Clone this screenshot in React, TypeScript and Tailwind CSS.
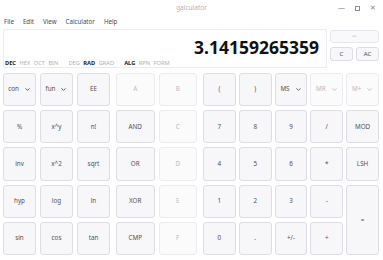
import { ChevronDown } from 'lucide-react';

type Btn = { label: string; off?: boolean; drop?: boolean; span?: boolean };

function Key({ b }: { b: Btn }) {
  return (
    <div
      className={`flex items-center justify-center gap-[5px] rounded-[3px] border text-[6.3px] leading-none ${
        b.off ? 'border-[#ebecf1] bg-[#fbfbfc] text-[#b9bac2]' : 'border-[#dcdde6] bg-[#f7f7f9] text-[#505056]'
      } ${b.span ? 'row-span-2' : ''}`}
    >
      <span>{b.label}</span>
      {b.drop && <ChevronDown className="h-[7px] w-[7px]" strokeWidth={3} />}
    </div>
  );
}

const leftKeys: Btn[] = [
  { label: 'con', drop: true }, { label: 'fun', drop: true }, { label: 'EE' },
  { label: '%' }, { label: 'x^y' }, { label: 'n!' },
  { label: 'inv' }, { label: 'x^2' }, { label: 'sqrt' },
  { label: 'hyp' }, { label: 'log' }, { label: 'ln' },
  { label: 'sin' }, { label: 'cos' }, { label: 'tan' },
];

const midKeys: Btn[] = [
  { label: 'A', off: true }, { label: 'B', off: true },
  { label: 'AND' }, { label: 'C', off: true },
  { label: 'OR' }, { label: 'D', off: true },
  { label: 'XOR' }, { label: 'E', off: true },
  { label: 'CMP' }, { label: 'F', off: true },
];

const rightKeys: Btn[] = [
  { label: '(' }, { label: ')' }, { label: 'MS', drop: true }, { label: 'MR', drop: true, off: true }, { label: 'M+', drop: true, off: true },
  { label: '7' }, { label: '8' }, { label: '9' }, { label: '/' }, { label: 'MOD' },
  { label: '4' }, { label: '5' }, { label: '6' }, { label: '*' }, { label: 'LSH' },
  { label: '1' }, { label: '2' }, { label: '3' }, { label: '-' }, { label: '=', span: true },
  { label: '0' }, { label: '.' }, { label: '+/-' }, { label: '+' },
];

export default function App() {
  return (
    <div className="relative h-[260px] w-[383px] overflow-hidden bg-white font-['Noto_Sans',sans-serif]">
      {/* Title bar */}
      <div className="relative flex h-[15px] items-center justify-center">
        <span className="text-[6.5px] text-[#b3b3b8]">galculator</span>
        <div className="absolute right-[7px] top-[3px] flex items-center gap-[10px] text-[7px] text-[#8a8a90]">
          <span>—</span>
          <span className="inline-block h-[5px] w-[5px] border border-[#8a8a90]" />
          <span>✕</span>
        </div>
      </div>

      {/* Menu */}
      <div className="flex h-[13px] items-center gap-[9px] px-[4px] text-[6.2px] text-[#4a4a4f]">
        <span>File</span>
        <span>Edit</span>
        <span>View</span>
        <span>Calculator</span>
        <span>Help</span>
      </div>

      {/* Display */}
      <div className="mt-[1px] flex gap-[3px] px-[3px]">
        <div className="flex h-[39px] w-[324px] flex-col rounded-[2px] border border-[#ececf0] bg-white">
          <div className="flex h-[28px] items-end justify-end pr-[7px]">
            <span className="text-[17.5px] font-bold leading-none text-[#111]">3.14159265359</span>
          </div>
          <div className="flex items-center gap-[10px] pl-[1px] pt-[5px] text-[5.7px] leading-none text-[#b0b1b8]">
            <div className="flex gap-[3.5px]">
              <span className="font-bold text-[#222]">DEC</span>
              <span>HEX</span>
              <span>OCT</span>
              <span>BIN</span>
            </div>
            <div className="flex gap-[3.5px]">
              <span>DEG</span>
              <span className="font-bold text-[#222]">RAD</span>
              <span>GRAD</span>
            </div>
            <div className="flex gap-[3.5px]">
              <span className="font-bold text-[#222]">ALG</span>
              <span>RPN</span>
              <span>FORM</span>
            </div>
          </div>
        </div>
        <div className="mt-[1px] flex w-[49px] flex-col gap-[4px]">
          <div className="flex h-[13px] items-center justify-center rounded-[3px] border border-[#e6e7ed] bg-[#f9f9fb] text-[5px] text-[#9a9ba3]">
            &lt;-
          </div>
          <div className="flex gap-[3px]">
            <div className="flex h-[14px] flex-1 items-center justify-center rounded-[3px] border border-[#dcdde6] bg-[#f7f7f9] text-[6px] text-[#4a4a4f]">
              C
            </div>
            <div className="flex h-[14px] flex-1 items-center justify-center rounded-[3px] border border-[#dcdde6] bg-[#f7f7f9] text-[6px] text-[#4a4a4f]">
              AC
            </div>
          </div>
        </div>
      </div>

      {/* Keypad */}
      <div className="mt-[5px] flex h-[182px] px-[3px]">
        <div className="grid w-[107px] grid-cols-3 grid-rows-5 gap-[4px]">
          {leftKeys.map((b, i) => (
            <Key key={i} b={b} />
          ))}
        </div>
        <div className="ml-[6px] grid w-[81px] grid-cols-2 grid-rows-5 gap-[4px]">
          {midKeys.map((b, i) => (
            <Key key={i} b={b} />
          ))}
        </div>
        <div className="ml-[6px] grid w-[176px] grid-cols-5 grid-rows-5 gap-x-[3px] gap-y-[4px]">
          {rightKeys.map((b, i) => (
            <Key key={i} b={b} />
          ))}
        </div>
      </div>
    </div>
  );
}
